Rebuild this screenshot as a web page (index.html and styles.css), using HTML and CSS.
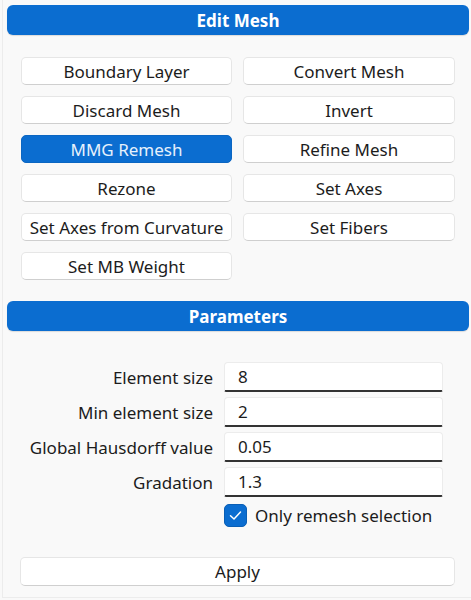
FILE: index.html
```html
<!DOCTYPE html>
<html>
<head>
<meta charset="utf-8">
<link rel="stylesheet" href="styles.css">
</head>
<body>
<div class="panel">
  <div class="header">Edit Mesh</div>
  <div class="btn-grid">
    <button class="btn">Boundary Layer</button>
    <button class="btn">Convert Mesh</button>
    <button class="btn">Discard Mesh</button>
    <button class="btn">Invert</button>
    <button class="btn active">MMG Remesh</button>
    <button class="btn">Refine Mesh</button>
    <button class="btn">Rezone</button>
    <button class="btn">Set Axes</button>
    <button class="btn">Set Axes from Curvature</button>
    <button class="btn">Set Fibers</button>
    <button class="btn">Set MB Weight</button>
  </div>
  <div class="header params">Parameters</div>
  <div class="form">
    <label class="lbl">Element size</label>
    <div class="input">8</div>
    <label class="lbl">Min element size</label>
    <div class="input">2</div>
    <label class="lbl">Global Hausdorff value</label>
    <div class="input">0.05</div>
    <label class="lbl">Gradation</label>
    <div class="input">1.3</div>
    <div class="check-row">
      <span class="box"><svg width="15" height="15" viewBox="0 0 15 15"><path d="M2.5 7.8 L6 11 L12.5 4" fill="none" stroke="#fff" stroke-width="1.5" stroke-linecap="round" stroke-linejoin="round"/></svg></span>
      <span class="check-text">Only remesh selection</span>
    </div>
  </div>
  <div class="apply-wrap">
    <button class="btn apply">Apply</button>
  </div>
</div>
</body>
</html>
```

FILE: styles.css
```css
html, body {
  margin: 0;
  padding: 0;
  background: #f9f9f9;
}
body {
  width: 471px;
  height: 600px;
  overflow: hidden;
  font-family: "Noto Sans", "Open Sans", sans-serif;
  color: #1c1c1c;
}
.panel {
  box-sizing: border-box;
  height: 598px;
  padding: 5px 2px 0 4px;
  border-left: 1px solid #ececec;
  border-bottom: 1px solid #ececec;
  margin-left: 2px;
}
.header {
  height: 30px;
  background: #0b6dd0;
  border-radius: 6px;
  color: #fff;
  font-weight: bold;
  font-size: 17px;
  display: flex;
  align-items: center;
  justify-content: center;
  box-shadow: 0 1px 1px rgba(0,0,0,0.12);
}
.btn-grid {
  display: grid;
  grid-template-columns: 211px 212px;
  column-gap: 11px;
  row-gap: 11px;
  padding: 0 14px;
  margin-top: 22px;
}
.btn {
  height: 28px;
  box-sizing: border-box;
  background: #fff;
  border: 1px solid #e6e6e6;
  border-bottom-color: #cfcfcf;
  border-radius: 5px;
  font-family: "Noto Sans", "Open Sans", sans-serif;
  font-size: 17px;
  color: #1c1c1c;
  padding: 0;
  display: flex;
  align-items: center;
  justify-content: center;
  white-space: nowrap;
}
.btn.active {
  background: #0b6dd0;
  border-color: #0b66c2;
  color: #e6f1fc;
}
.params {
  margin-top: 21px;
}
.form {
  display: grid;
  grid-template-columns: 206px 219px;
  column-gap: 11px;
  row-gap: 5px;
  margin-top: 31px;
  padding-right: 26px;
}
.lbl {
  font-size: 17px;
  text-align: right;
  align-self: center;
  color: #1c1c1c;
  white-space: nowrap;
}
.input {
  height: 30px;
  box-sizing: border-box;
  background: #fff;
  border: 1px solid #ececec;
  border-bottom: 2px solid #333;
  border-radius: 4px 4px 2px 2px;
  font-size: 17px;
  padding-left: 13px;
  display: flex;
  align-items: center;
}
.check-row {
  grid-column: 2;
  display: flex;
  align-items: center;
  gap: 8px;
  margin-top: 2px;
}
.box {
  width: 23px;
  height: 23px;
  box-sizing: border-box;
  background: #0b6dd0;
  border: 1px solid #0a5fb5;
  border-radius: 5px;
  display: flex;
  align-items: center;
  justify-content: center;
}
.check-text {
  font-size: 17px;
}
.apply-wrap {
  padding: 0 14px 0 13px;
  margin-top: 30px;
}
.apply {
  width: 100%;
  height: 29px;
}
```
